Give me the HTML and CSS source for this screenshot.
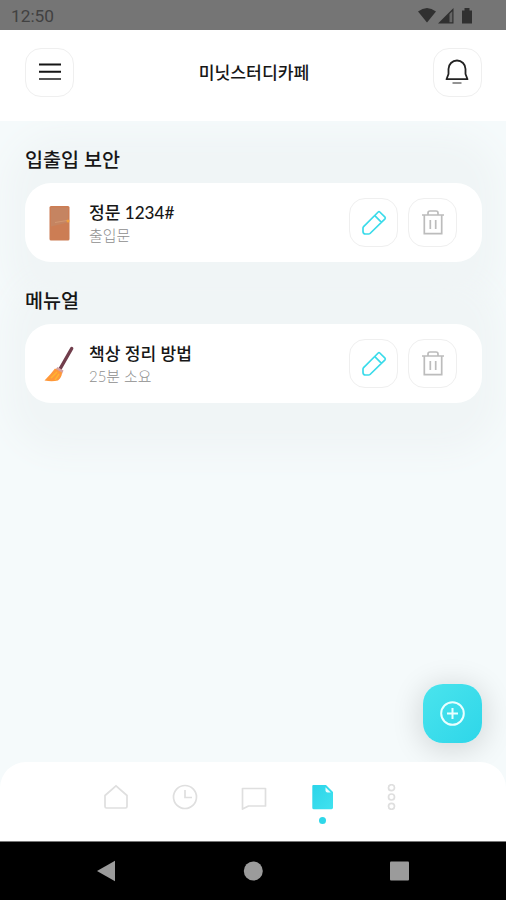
FILE: index.html
```html
<!DOCTYPE html>
<html lang="ko">
<head>
<meta charset="utf-8">
<title>미닛스터디카페</title>
<link rel="stylesheet" href="styles.css">
</head>
<body>
<div class="app">
  <div class="status">
    <span>12:50</span>
    <svg width="56" height="18" viewBox="0 0 56 18" fill="#303030">
      <path d="M0 4.500Q9-2.500 18 4.500L9 15.500Z"/>
      <path d="M20 16.500L35.500 1V16.500Z"/><path fill="#666" d="M31.500 7V15.300H34.300V4.200Z"/>
      <path d="M44 3.500h2.500V1h5v2.500H54V16.500H44Z"/>
    </svg>
  </div>
  <header class="header">
    <button class="btn" aria-label="메뉴">
      <svg width="24" height="24" viewBox="0 0 24 24" fill="none" stroke-width="2"><path stroke="#151515" d="M1 4.500h22M1 11.800h22"/><path stroke="#555" d="M1 19h22"/></svg>
    </button>
    <h1>미닛스터디카페</h1>
    <button class="btn" aria-label="알림">
      <svg width="24" height="26" viewBox="0 0 24 26" fill="none" stroke="#222" stroke-width="1.800"><path d="M3.500 15V10a8.500 8.500 0 0 1 17 0V15L22.500 20.200H1.500Z" stroke-linejoin="round"/><path stroke="#888" d="M7.500 24h9"/></svg>
    </button>
  </header>
  <main class="content">
    <section>
      <h2>입출입 보안</h2>
      <article class="card">
        <svg class="pic" width="34" height="38" viewBox="0 0 34 38">
          <rect x="7.500" y="2" width="20" height="34.500" rx="1.500" fill="#cc7d54"/><path d="M9 3.500h17v15l-17 4Z" fill="#c58461"/><path d="M13 18.500l12-2" stroke="#d39872"/><circle cx="26" cy="17" r="1.500" fill="#f2a03b"/>
        </svg>
        <div class="text"><h3>정문 1234#</h3><p>출입문</p></div>
        <button class="btn" aria-label="수정"><svg width="26" height="26" viewBox="0 0 26 26"><use href="#pencil"/></svg></button>
        <button class="btn" aria-label="삭제"><svg width="24" height="26" viewBox="0 0 24 26"><use href="#trash"/></svg></button>
      </article>
    </section>
    <section>
      <h2>메뉴얼</h2>
      <article class="card">
        <svg class="pic" width="34" height="38" viewBox="0 0 34 38">
          <path d="M29.700 3.500L18 24" stroke="#713e4c" stroke-width="3.400" stroke-linecap="round"/>
          <path d="M15.500 22l6 3.500-1.500 3.500-7-4Z" fill="#d5a0a0"/>
          <path d="M13 23.500Q9 29 2.500 35.500Q10 36.800 16 35.500Q20 32 20 27.500Z" fill="#ff983a"/><path d="M9 33l6-6M13 35l4-6" stroke="#ffb52f" stroke-width="1.500"/>
        </svg>
        <div class="text"><h3>책상 정리 방법</h3><p>25분 소요</p></div>
        <button class="btn" aria-label="수정"><svg width="26" height="26" viewBox="0 0 26 26"><use href="#pencil"/></svg></button>
        <button class="btn" aria-label="삭제"><svg width="24" height="26" viewBox="0 0 24 26"><use href="#trash"/></svg></button>
      </article>
    </section>
    <button class="fab" aria-label="추가">
      <svg width="26" height="26" viewBox="0 0 26 26" fill="none" stroke="#e9ffff" stroke-width="2"><circle cx="12.500" cy="12.500" r="11.300"/><path d="M12.500 7v11M7 12.500h11"/></svg>
    </button>
  </main>
  <nav class="tabs">
    <a><svg width="26" height="26" viewBox="0 0 26 26"><path d="M2 11.500L13 1.800 24 11.500V22.500q0 1.500-1.500 1.500h-19Q2 24 2 22.500Z"/></svg></a>
    <a><svg width="26" height="26" viewBox="0 0 26 26"><circle cx="13" cy="13" r="11.500"/><path d="M13 6v7.500h7"/></svg></a>
    <a><svg width="26" height="26" viewBox="0 0 26 26"><path d="M1.500 4.500h23v17.500H7.500L1.500 25Z" stroke-linejoin="round"/></svg></a>
    <a class="active"><svg width="26" height="26" viewBox="0 0 26 26"><defs><linearGradient id="g" x1="0" y1="0" x2="1" y2="1"><stop stop-color="#2bd4e9"/><stop offset="1" stop-color="#41e2ef"/></linearGradient></defs><path fill="url(#g)" stroke="none" d="M3.300 1H16L23 8V23.500Q23 25.300 21.500 25.300H3.800Q2.300 25.300 2.300 23.800V2Q2.300 1 3.300 1Z"/><path fill="#e8fcfd" stroke="none" d="M15.500 3.300L20.800 8.600H17.500Q15.500 8.600 15.500 6.600Z"/></svg></a>
    <a><svg width="26" height="26" viewBox="0 0 26 26"><circle cx="12.500" cy="3.700" r="3"/><circle cx="12.500" cy="13" r="3"/><circle cx="12.500" cy="22.300" r="3"/></svg></a>
  </nav>
  <div class="system">
    <svg width="20" height="22" viewBox="0 0 20 22"><path d="M0 11L18 .8V21.200Z"/></svg>
    <svg width="20" height="20" viewBox="0 0 20 20"><circle cx="10.300" cy="10" r="9.500"/></svg>
    <svg width="20" height="20" viewBox="0 0 20 20"><rect x="0" y=".5" width="19" height="19" rx="1"/></svg>
  </div>
</div>
<svg class="defs" width="0" height="0">
  <symbol id="pencil" viewBox="0 0 26 26"><path fill="none" stroke="#3bdbea" stroke-width="1.700" stroke-linejoin="round" d="M17.200 2Q18 1.200 18.800 2L24 7.200Q24.600 8 24 8.800L9 23.500Q8.500 24 7.500 24H4.500Q2 24 2 21.500V18Q2 17.200 2.600 16.600ZM13.800 5.700L20.300 12.200"/></symbol>
  <symbol id="trash" viewBox="0 0 24 26"><path fill="none" stroke="#bcbcbc" stroke-width="1.700" d="M1 5h22M7 4.500V3Q7 1 9 1h6Q17 1 17 3V4.500M3.300 5V23.700H20.700V5M9.300 10v9M14.700 10v9"/></symbol>
</svg>
</body>
</html>
```
FILE: styles.css
```css
* { box-sizing: border-box; }
body { margin: 0; font-family: Lato, "Noto Sans CJK KR", sans-serif; color: #171717; }
h1, h2, h3, p { margin: 0; white-space: nowrap; }
svg { display: block; flex: none; }
.defs { position: absolute; }
.app { width: 506px; height: 900px; display: flex; flex-direction: column; background: #f5fafb; overflow: hidden; }
.status { height: 30px; flex: none; background: #757575; display: flex; align-items: center; justify-content: space-between; padding: 2px 32px 0 11px; font: 17.300px/20px Roboto, sans-serif; color: #414141; }
.header { height: 91px; flex: none; background: #fff; display: flex; align-items: center; justify-content: space-between; padding: 0 24px 7px 25px; position: relative; z-index: 1; }
.header h1 { font-size: 17.200px; line-height: 24px; font-weight: 500; padding: 1px 0 0 1px; }
.btn { width: 49px; height: 49px; flex: none; padding: 0; border: 1px solid #efefef; border-radius: 16px; background: #fff; display: flex; align-items: center; justify-content: center; }
.content { flex: 1; padding: 25px 24px 0 25px; display: flex; flex-direction: column; position: relative; z-index: 0; }
section { height: 141px; }
h2 { font-size: 19.600px; line-height: 28px; font-weight: 500; margin-bottom: 9px; }
.card { height: 79px; border-radius: 26px; background: #fff; display: flex; align-items: center; padding: 0 25px 0 17px; position: relative; }
.card::before { content: ""; position: absolute; z-index: -1; inset: -20px 12px; border-radius: 26px; box-shadow: 0 0 30px 30px #f0f5f6; background: #f0f5f6; }
.card .btn + .btn { margin-left: 10px; }
.text { flex: 1; padding: 1px 0 0 13px; }
h3 { font-size: 17.100px; line-height: 24px; font-weight: 500; }
.text p { font-size: 14.900px; line-height: 20px; color: #8e8e8e; font-weight: 300; }
.fab { position: absolute; right: 24px; bottom: 19px; width: 59px; height: 59px; border: 0; border-radius: 20px; padding: 0; display: flex; align-items: center; justify-content: center; background: linear-gradient(135deg, #4ae4ed, #2ed6e9); box-shadow: 0 4px 28px 4px rgba(0, 0, 0, .13); }
.tabs { height: 79px; flex: none; background: #fff; border-radius: 26px 26px 0 0; display: flex; justify-content: center; gap: 43px; padding-top: 22px; padding-left: 1px; position: relative; z-index: 1; }
.tabs svg { fill: none; stroke: #dfdfdf; stroke-width: 1.7; }
.active::after { content: ""; display: block; width: 7px; height: 7px; border-radius: 50%; background: #2fd7e9; margin: 7px auto 0; }
.system { height: 59px; flex: none; background: #000; border-top: 1px solid #777; display: flex; align-items: center; justify-content: center; gap: 126.500px; fill: #9b9b9b; }
```
